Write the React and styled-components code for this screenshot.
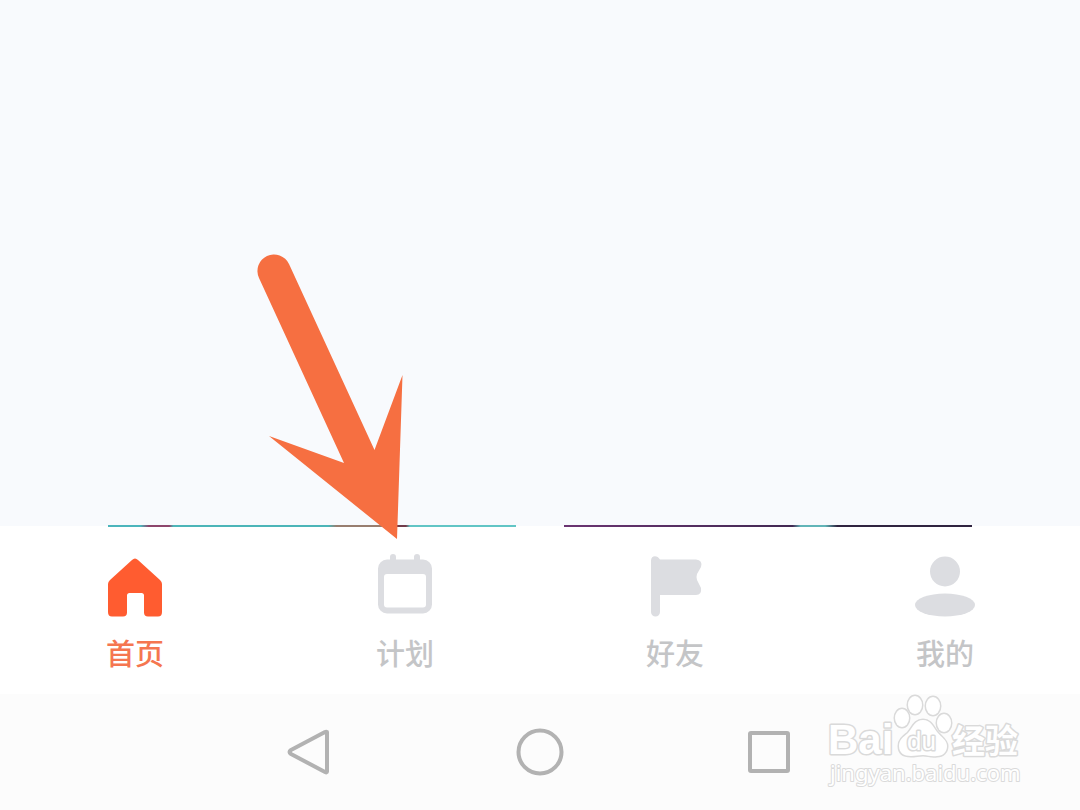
import React, { useState } from "react";
import styled, { createGlobalStyle } from "styled-components";

const GlobalStyle = createGlobalStyle`
  * {
    box-sizing: border-box;
  }
  body {
    margin: 0;
    background-color: #fcfcfc;
    font-family: "Liberation Sans", "Noto Sans CJK SC", sans-serif;
  }
`;

const Screen = styled.div`
  display: flex;
  flex-direction: column;
  min-height: 100vh;
`;

const Content = styled.main`
  position: relative;
  flex: 1;
  display: flex;
  flex-direction: column;
  justify-content: flex-end;
  background-color: #f8fafd;
`;

const CardRow = styled.div`
  display: grid;
  grid-template-columns: 1fr 1fr;
  gap: 48px;
  padding: 0 10%;
  margin-bottom: -1px;
`;

const CardEdge = styled.div`
  height: 2px;
  background: ${(props) => props.$colors};
`;

const Pointer = styled.svg`
  position: absolute;
  left: 256px;
  bottom: -14px;
  width: 148px;
  height: 288px;
  z-index: 1;
  pointer-events: none;
`;

const TabBar = styled.nav`
  display: grid;
  grid-template-columns: repeat(4, 1fr);
  background-color: #ffffff;
`;

const Tab = styled.button`
  display: flex;
  flex-direction: column;
  align-items: center;
  gap: 17px;
  padding: 28px 0 19px;
  border: none;
  background: none;
  font-family: inherit;
  font-size: 29px;
  font-weight: 500;
  line-height: 40px;
  color: ${(props) => (props.$active ? "#f57650" : "#c4c5c7")};
  cursor: pointer;
`;

const TabIcon = styled.svg`
  width: 64px;
  height: 64px;
  fill: ${(props) => (props.$active ? "#ff5c30" : "#dcdde1")};
`;

const SystemBar = styled.footer`
  position: relative;
  display: grid;
  grid-template-columns: repeat(3, 1fr);
  padding: 0 18%;
  height: 116px;
  background-color: #fcfcfc;
`;

const SystemButton = styled.button`
  display: flex;
  align-items: center;
  justify-content: center;
  padding: 0;
  border: none;
  background: none;
  cursor: pointer;
`;

const SystemIcon = styled.svg`
  width: 48px;
  height: 48px;
  fill: none;
  stroke: #b2b2b2;
  stroke-width: 4;
  stroke-linejoin: round;
`;

const Watermark = styled.svg`
  position: absolute;
  right: 52px;
  top: 0;
  width: 204px;
  height: 100px;
  overflow: visible;
  pointer-events: none;
  fill: #ffffff;
  stroke: #dadada;
  stroke-width: 3;
  stroke-linejoin: round;
  paint-order: stroke;
`;

const MarkText = styled.text`
  font-family: ${(props) => props.$font || '"Liberation Sans", sans-serif'};
  font-size: ${(props) => props.$size}px;
  font-weight: ${(props) => props.$weight || 700};
`;

const tabs = [
  {
    label: "首页",
    icon: (
      <path d="M29 6Q32 3 35 6L57 26Q59 28 59 30V58Q59 62.500 55 62.500H45Q41 62.500 41 58.500V41.500Q41 39 38.500 39H26.500Q24 39 24 41.500V58.500Q24 62.500 20 62.500H9Q5 62.500 5 58V30Q5 28 7 26Z" />
    ),
  },
  {
    label: "计划",
    icon: (
      <path
        fillRule="evenodd"
        d="M14 5.500H17V3A3 3 0 0 1 23 3V5.500H41V3A3 3 0 0 1 47 3V5.500H50A9 9 0 0 1 59 14.500V50.500A9 9 0 0 1 50 59.500H14A9 9 0 0 1 5 50.500V14.500A9 9 0 0 1 14 5.500ZM14 20A3 3 0 0 0 11 23V50.500A3 3 0 0 0 14 53.500H50A3 3 0 0 0 53 50.500V23A3 3 0 0 0 50 20Z"
      />
    ),
  },
  {
    label: "好友",
    icon: (
      <path d="M8 6.500C8 1 14.500 .8 17 5.500H53Q60 6 58 13L54 20Q53 23 54 26L58 34Q59 41 53 41H17V58A4.500 4.500 0 0 1 8 58Z" />
    ),
  },
  {
    label: "我的",
    icon: (
      <>
        <circle cx="32" cy="17.500" r="15" />
        <ellipse cx="32" cy="51" rx="30" ry="11.500" />
      </>
    ),
  },
];

const systemKeys = [
  { name: "返回", icon: <path d="M41 4V43.500Q41 45 39 44L5 26Q2 24 5 22L39 4Q41 3 41 5Z" /> },
  { name: "主屏幕", icon: <circle cx="24" cy="24" r="21.500" /> },
  { name: "最近任务", icon: <rect x="4" y="5" width="38" height="38" rx="1" /> },
];

const BaiduMark = () => (
  <Watermark viewBox="0 0 204 100">
    <MarkText x="4" y="60" $size={42}>
      Bai
    </MarkText>
    <ellipse cx="78" cy="24" rx="7" ry="9" />
    <ellipse cx="91" cy="11" rx="7" ry="9" />
    <ellipse cx="109" cy="12" rx="7" ry="9" />
    <ellipse cx="120" cy="29" rx="7" ry="9" />
    <path d="M99 26C91 26 89 33 84 39C79 43 75 46 75 52C75 59 80 62 87 62C92 62 94 61 99 61C104 61 107 63 113 62C119 62 123 58 123 52C123 46 117 43 113 38C109 33 107 26 99 26Z" />
    <MarkText x="83" y="56" $size={26} $weight={400}>
      du
    </MarkText>
    <MarkText x="128" y="59" $size={33} $font='"Noto Sans CJK SC", sans-serif'>
      经验
    </MarkText>
    <MarkText
      x="6"
      y="87"
      strokeWidth="2"
      $size={22}
      $weight={400}
      $font='"Noto Sans", sans-serif'
    >
      jingyan.baidu.com
    </MarkText>
  </Watermark>
);

const App = () => {
  const [current, setCurrent] = useState("首页");

  return (
    <>
      <GlobalStyle />
      <Screen>
        <Content>
          <CardRow>
            <CardEdge $colors="linear-gradient(90deg, #4cb5bc 0 8%, #8d466c 10% 15%, #4cb5b8 16% 54%, #987e70 56% 68%, #713b4a 69% 73%, #62c5c5 74%)" />
            <CardEdge $colors="linear-gradient(90deg, #6b3472, #422953 56%, #62b5b8 58% 64%, #302440 67%)" />
          </CardRow>
          <Pointer viewBox="0 0 148 288">
            <path
              fill="#f66f41"
              d="M33 12L118.500 198L146.500 123L141 287L13 184L88 211L3 26A16.500 16.500 0 0 1 33 12Z"
            />
          </Pointer>
        </Content>
        <TabBar>
          {tabs.map((tab) => (
            <Tab
              key={tab.label}
              $active={tab.label === current}
              onClick={() => setCurrent(tab.label)}
            >
              <TabIcon viewBox="0 0 64 64" $active={tab.label === current}>
                {tab.icon}
              </TabIcon>
              <span>{tab.label}</span>
            </Tab>
          ))}
        </TabBar>
        <SystemBar>
          {systemKeys.map((key) => (
            <SystemButton key={key.name} aria-label={key.name}>
              <SystemIcon viewBox="0 0 48 48">{key.icon}</SystemIcon>
            </SystemButton>
          ))}
          <BaiduMark />
        </SystemBar>
      </Screen>
    </>
  );
};

export default App;
